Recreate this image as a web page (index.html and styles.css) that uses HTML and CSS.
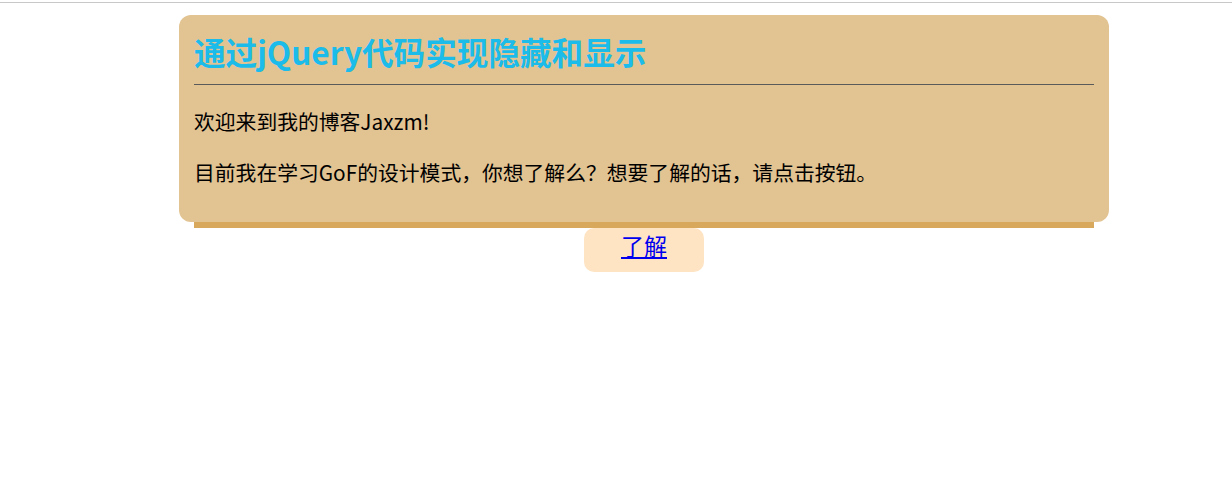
FILE: index.html
```html
<!DOCTYPE html>
<html lang="zh-CN">
<head>
<meta charset="utf-8">
<title>通过jQuery代码实现隐藏和显示</title>
<link rel="stylesheet" href="styles.css">
</head>
<body>
<div class="topline"></div>
<div class="page">
  <div class="card">
    <h1 class="title">通过jQuery代码实现隐藏和显示</h1>
    <div class="rule"></div>
    <p class="text">欢迎来到我的博客Jaxzm!</p>
    <p class="text">目前我在学习GoF的设计模式，你想了解么？想要了解的话，请点击按钮。</p>
  </div>
  <div class="strip"></div>
  <div class="btn"><a href="#" class="btn-link">了解</a></div>
</div>
</body>
</html>
```
FILE: styles.css
```css
html, body {
  margin: 0;
  padding: 0;
  background: #ffffff;
}
body {
  font-family: "Noto Sans CJK SC", "Noto Sans", sans-serif;
  color: #000;
}
.topline {
  height: 2px;
  border-bottom: 1px solid #c8c8c8;
}
.page {
  margin-left: 179px;
  width: 930px;
  padding-top: 12px;
}
.card {
  background: #e2c392;
  border-radius: 12px;
  padding: 14px 15px 35px 15px;
  height: 158px;
}
.title {
  margin: 0;
  font-size: 31.6px;
  line-height: 45px;
  font-weight: bold;
  color: #1bbbea;
}
.rule {
  margin-top: 10px;
  height: 1px;
  background: #5a5a5a;
}
.text {
  margin: 22px 0 0 0;
  font-size: 20.8px;
  line-height: 28px;
}
.text + .text {
  margin-top: 23px;
}
.strip {
  margin-left: 15px;
  width: 900px;
  height: 6px;
  background: #d8a85c;
}
.btn {
  margin-left: 405px;
  width: 120px;
  height: 44px;
  background: #ffe4c4;
  border-radius: 10px;
  display: flex;
  justify-content: center;
  align-items: flex-start;
  padding-top: 2px;
  box-sizing: border-box;
}
.btn-link {
  font-size: 23px;
  line-height: 30px;
  color: #0000ee;
  text-decoration: underline;
}
```
